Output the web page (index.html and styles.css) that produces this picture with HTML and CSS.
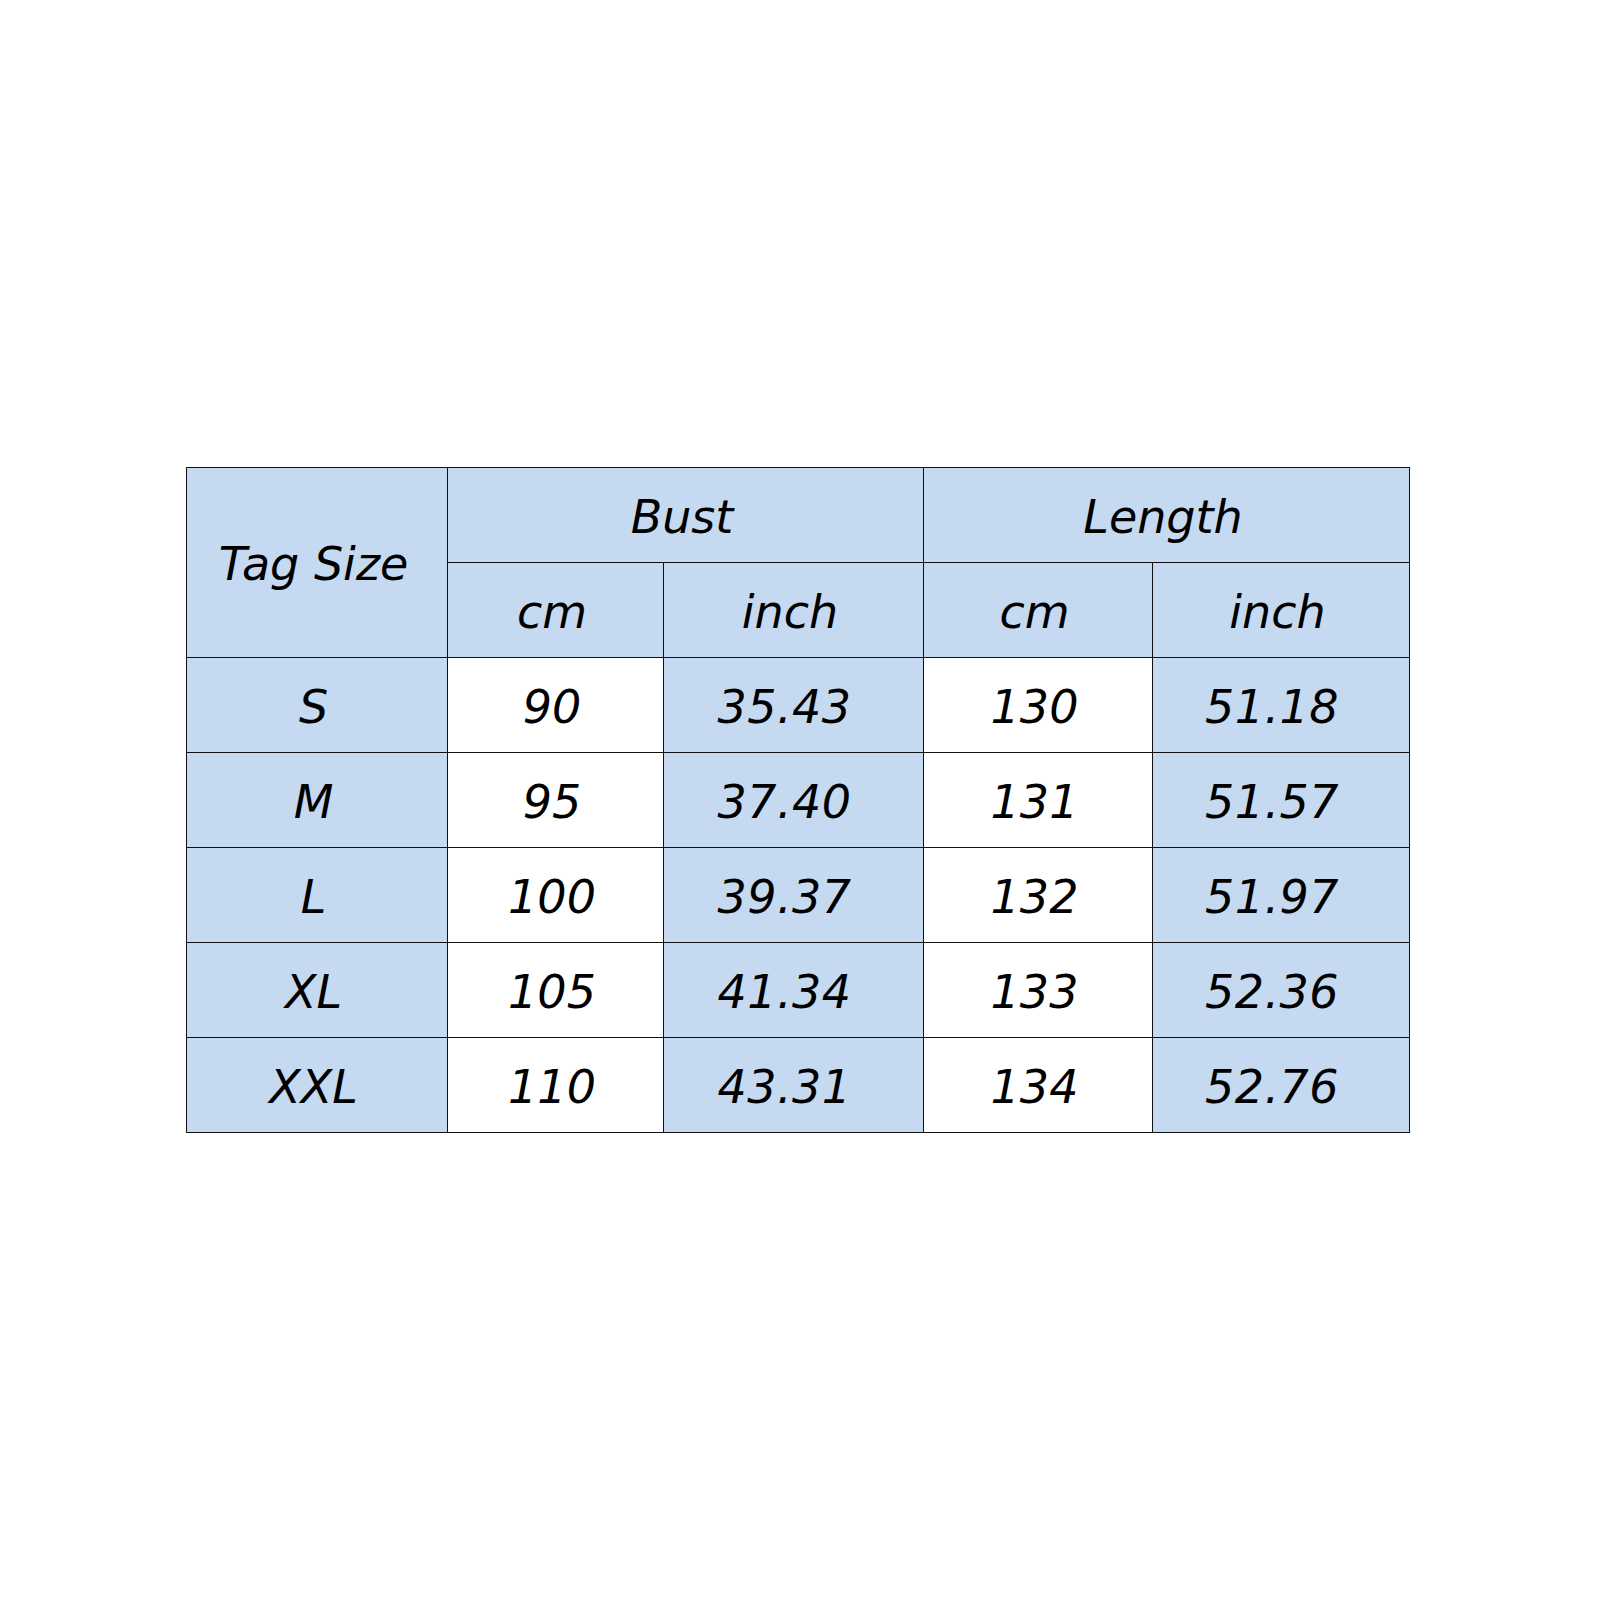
FILE: index.html
```html
<!DOCTYPE html>
<html>
<head>
<meta charset="utf-8">
<link rel="stylesheet" href="styles.css">
</head>
<body>
<div class="page">
  <table class="chart">
    <colgroup>
      <col class="c1"><col class="c2"><col class="c3"><col class="c4"><col class="c5">
    </colgroup>
    <tr>
      <td class="blue" rowspan="2">Tag Size</td>
      <td class="blue" colspan="2">Bust</td>
      <td class="blue" colspan="2">Length</td>
    </tr>
    <tr>
      <td class="blue">cm</td><td class="blue">inch</td><td class="blue">cm</td><td class="blue">inch</td>
    </tr>
    <tr><td class="blue">S</td><td>90</td><td class="blue dec">35.43</td><td>130</td><td class="blue dec">51.18</td></tr>
    <tr><td class="blue">M</td><td>95</td><td class="blue dec">37.40</td><td>131</td><td class="blue dec">51.57</td></tr>
    <tr><td class="blue">L</td><td>100</td><td class="blue dec">39.37</td><td>132</td><td class="blue dec">51.97</td></tr>
    <tr><td class="blue">XL</td><td>105</td><td class="blue dec">41.34</td><td>133</td><td class="blue dec">52.36</td></tr>
    <tr><td class="blue">XXL</td><td>110</td><td class="blue dec">43.31</td><td>134</td><td class="blue dec">52.76</td></tr>
  </table>
</div>
</body>
</html>
```
FILE: styles.css
```css
html, body {
  margin: 0;
  padding: 0;
  background: #ffffff;
}
.page {
  padding: 467px 0 0 186px;
}
.chart {
  border-collapse: collapse;
  table-layout: fixed;
  width: 1224px;
  font-family: "DejaVu Sans", "Liberation Sans", sans-serif;
  font-style: italic;
  font-size: 46px;
  color: #000;
}
.c1 { width: 261px; }
.c2 { width: 216px; }
.c3 { width: 260px; }
.c4 { width: 229px; }
.c5 { width: 257px; }
.chart td {
  border: 1px solid #111;
  height: 91px;
  padding: 3px 7px 0 0;
  text-align: center;
  vertical-align: middle;
  background: #ffffff;
  line-height: 1;
}
.chart td.blue {
  background: #c5d9f1;
}
.chart td.dec {
  padding-right: 18px;
  letter-spacing: 0.5px;
}
```
